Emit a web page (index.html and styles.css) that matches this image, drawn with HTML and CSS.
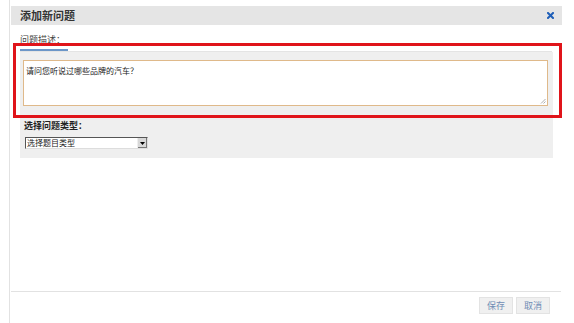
FILE: index.html
```html
<!DOCTYPE html>
<html lang="zh-CN">
<head>
<meta charset="utf-8">
<title>添加新问题</title>
<link rel="stylesheet" href="styles.css">
</head>
<body>
<div class="dialog">
  <div class="titlebar">
    <span class="title">添加新问题</span>
    <svg class="close" width="7" height="7" viewBox="0 0 7 7"><path d="M1 1 L6 6 M6 1 L1 6" stroke="#1f5fb8" stroke-width="2" stroke-linecap="square"/></svg>
  </div>
  <div class="label">问题描述：</div>
  <div class="tabs"><div class="tab-active"></div></div>
  <div class="panel">
    <div class="textarea">请问您听说过哪些品牌的汽车？<svg class="grip" width="6" height="6" viewBox="0 0 6 6"><path d="M5.5 1 L1 5.5 M5.5 3.5 L3.5 5.5" stroke="#999" stroke-width="0.8"/></svg></div>
    <div class="type-label">选择问题类型：</div>
    <div class="select"><span class="select-text">选择题目类型</span><span class="select-btn"><svg width="5" height="3" viewBox="0 0 5 3"><path d="M0 0 H5 L2.5 3 Z" fill="#000"/></svg></span></div>
  </div>
  <div class="spacer"></div>
  <div class="footer">
    <button class="btn">保存</button>
    <button class="btn">取消</button>
  </div>
  <div class="highlight"></div>
</div>
</body>
</html>
```
FILE: styles.css
```css
html, body {
  margin: 0;
  padding: 0;
  background: #fff;
}
body {
  font-family: "Noto Sans CJK SC", "Liberation Sans", sans-serif;
  color: #333;
}
.dialog {
  position: relative;
  margin-left: 9px;
  width: 553px;
  height: 323px;
  border-left: 1px solid #e2e2e2;
  box-sizing: border-box;
  padding-top: 6px;
  display: flex;
  flex-direction: column;
}
.titlebar {
  margin-left: 1px;
  width: 551px;
  height: 19px;
  background: #e5e5e5;
  display: flex;
  align-items: center;
  justify-content: space-between;
  padding: 0 8px 0 9px;
  box-sizing: border-box;
}
.title {
  font-size: 11px;
  font-weight: bold;
  color: #333;
  line-height: 19px;
}
.close {
  display: block;
}
.label {
  margin: 9px 0 0 10px;
  font-size: 9px;
  line-height: 12px;
  color: #444;
}
.tabs {
  margin: 3px 0 0 10px;
  width: 532px;
  border-bottom: 1px solid #e4e4e4;
}
.tab-active {
  width: 48px;
  height: 2px;
  background: #6b96c8;
}
.panel {
  margin-left: 10px;
  width: 533px;
  background: #efefef;
  padding: 8px 5px 9px 3px;
  box-sizing: border-box;
}
.textarea {
  position: relative;
  height: 46px;
  background: #fff;
  border: 1px solid #dfb98a;
  box-sizing: border-box;
  font-size: 8px;
  line-height: 11px;
  padding: 4px 2px;
  color: #222;
}
.grip {
  position: absolute;
  right: 1px;
  bottom: 1px;
}
.type-label {
  margin: 14px 0 0 1px;
  font-size: 9px;
  font-weight: bold;
  line-height: 12px;
  color: #222;
}
.select {
  margin: 5px 0 0 2px;
  width: 123px;
  height: 12px;
  box-sizing: border-box;
  background: #fff;
  border-top: 1px solid #555;
  border-left: 1px solid #555;
  border-right: 1px solid #ddd;
  border-bottom: 1px solid #ddd;
  display: flex;
  align-items: center;
  justify-content: space-between;
}
.select-text {
  font-size: 8px;
  line-height: 10px;
  padding-left: 1px;
  color: #222;
}
.select-btn {
  width: 10px;
  height: 10px;
  background: #d8d8d8;
  border-left: 1px solid #eee;
  box-sizing: border-box;
  display: flex;
  align-items: center;
  justify-content: center;
  box-shadow: inset -1px -1px 0 #777;
}
.spacer {
  flex: 1;
}
.footer {
  margin-left: 1px;
  width: 550px;
  border-top: 1px solid #e2e2e2;
  box-shadow: 0 1px 0 #f5f5f5;
  padding: 5px 11px 9px 0;
  box-sizing: border-box;
  display: flex;
  justify-content: flex-end;
  gap: 3px;
}
.btn {
  width: 34px;
  height: 17px;
  padding: 0;
  background: #f0f0f0;
  border: 1px solid #e3e3e3;
  font-family: "Noto Sans CJK SC", "Liberation Sans", sans-serif;
  font-size: 9px;
  line-height: 15px;
  color: #6f8db5;
}
.highlight {
  position: absolute;
  left: 3px;
  top: 43px;
  width: 549px;
  height: 75px;
  border: 3px solid #e0141a;
  box-sizing: border-box;
  pointer-events: none;
}
```
